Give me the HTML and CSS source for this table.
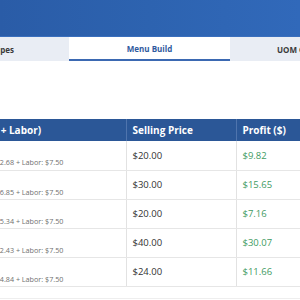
FILE: index.html
```html
<!DOCTYPE html>
<html lang="en">
<head>
<meta charset="utf-8">
<title>Menu Build</title>
<link rel="stylesheet" href="styles.css">
</head>
<body>
<div class="page">
  <header class="topbar"></header>
  <nav class="tabs">
    <div class="tab">Prep Recipes</div>
    <div class="tab active">Menu Build</div>
    <div class="tab">UOM Conversion</div>
  </nav>
  <section class="content">
    <table class="menu">
      <thead>
        <tr>
          <th class="col-cost">Cost (Food + Labor)</th>
          <th class="col-price">Selling Price</th>
          <th class="col-profit">Profit ($)</th>
        </tr>
      </thead>
      <tbody>
        <tr>
          <td class="col-cost"><span class="breakdown">Ingredients: $2.68 + Labor: $7.50</span></td>
          <td class="col-price">$20.00</td>
          <td class="col-profit">$9.82</td>
        </tr>
        <tr>
          <td class="col-cost"><span class="breakdown">Ingredients: $6.85 + Labor: $7.50</span></td>
          <td class="col-price">$30.00</td>
          <td class="col-profit">$15.65</td>
        </tr>
        <tr>
          <td class="col-cost"><span class="breakdown">Ingredients: $5.34 + Labor: $7.50</span></td>
          <td class="col-price">$20.00</td>
          <td class="col-profit">$7.16</td>
        </tr>
        <tr>
          <td class="col-cost"><span class="breakdown">Ingredients: $2.43 + Labor: $7.50</span></td>
          <td class="col-price">$40.00</td>
          <td class="col-profit">$30.07</td>
        </tr>
        <tr>
          <td class="col-cost"><span class="breakdown">Ingredients: $4.84 + Labor: $7.50</span></td>
          <td class="col-price">$24.00</td>
          <td class="col-profit">$11.66</td>
        </tr>
      </tbody>
    </table>
  </section>
</div>
</body>
</html>
```

FILE: styles.css
```css
* { box-sizing: border-box; }

html, body {
  margin: 0;
  padding: 0;
  background: #ffffff;
}

body {
  font-family: "Open Sans", "Noto Sans", sans-serif;
  color: #333333;
}

.page {
  width: 300px;
  height: 300px;
  overflow: hidden;
}

.topbar {
  height: 37px;
  background: linear-gradient(90deg, #2a5ca7 0%, #2d63b0 50%, #3169ba 100%);
  border-bottom: 1px solid #3a6fbd;
}

.tabs {
  display: flex;
  height: 24px;
  margin-left: -92px;
  background: #e9edf4;
  width: 520px;
}

.tab {
  flex: 0 0 161px;
  display: flex;
  align-items: center;
  justify-content: center;
  font-size: 8px;
  font-weight: 700;
  color: #3a3a3a;
  white-space: nowrap;
}

.tab.active {
  background: #ffffff;
  color: #2f5a9e;
  border-bottom: 2px solid #3b69b2;
}

.content {
  padding-top: 58px;
  padding-bottom: 11px;
  border-bottom: 1px solid #eeeeee;
}

.menu {
  border-collapse: collapse;
  margin-left: -60px;
  width: 420px;
  table-layout: fixed;
}

.menu th {
  background: #2b5797;
  color: #ffffff;
  font-size: 10px;
  font-weight: 700;
  text-align: left;
  height: 22px;
  padding: 0 6px;
  border-left: 1px solid #4f74ad;
  white-space: nowrap;
}

.menu th:first-child { border-left: none; }

.menu td {
  height: 29px;
  padding: 0 6px;
  font-size: 9.5px;
  border-bottom: 1px solid #e6e6e6;
  border-left: 1px solid #e2e2e2;
  vertical-align: middle;
  white-space: nowrap;
}

.menu td:first-child { border-left: none; }

.col-cost { width: 186px; }
.col-price { width: 110px; }
.col-profit { width: 124px; }

.menu td.col-cost {
  vertical-align: top;
  padding-top: 14px;
  padding-left: 14px;
}

.breakdown {
  font-size: 7.2px;
  color: #6f6f6f;
}

.menu td.col-profit {
  color: #3f9b63;
}
```
